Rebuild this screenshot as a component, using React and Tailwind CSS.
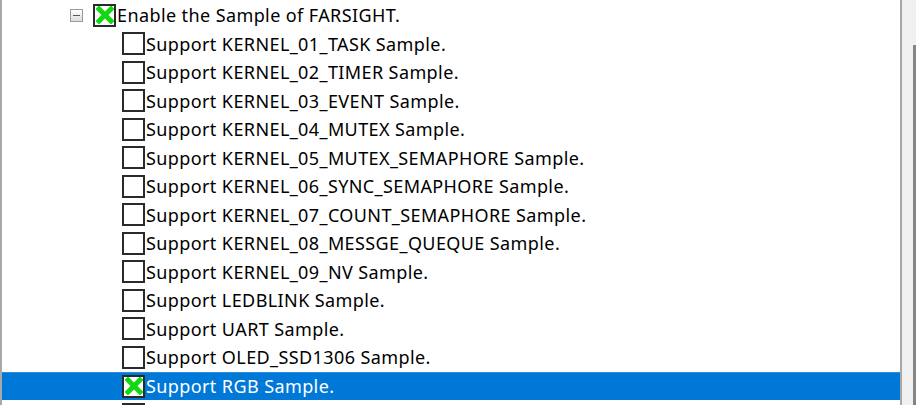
import React from 'react'

const items = [
  'Support KERNEL_01_TASK Sample.',
  'Support KERNEL_02_TIMER Sample.',
  'Support KERNEL_03_EVENT Sample.',
  'Support KERNEL_04_MUTEX Sample.',
  'Support KERNEL_05_MUTEX_SEMAPHORE Sample.',
  'Support KERNEL_06_SYNC_SEMAPHORE Sample.',
  'Support KERNEL_07_COUNT_SEMAPHORE Sample.',
  'Support KERNEL_08_MESSGE_QUEQUE Sample.',
  'Support KERNEL_09_NV Sample.',
  'Support LEDBLINK Sample.',
  'Support UART Sample.',
  'Support OLED_SSD1306 Sample.',
  { label: 'Support RGB Sample.', checked: true, selected: true },
  { label: '' },
]

function Check({ checked }) {
  return (
    <span className="w-[23px] h-[23px] shrink-0 border-2 border-[#2a2a2a] bg-white flex items-center justify-center">
      {checked && (
        <svg width="18" height="18" viewBox="0 0 18 18">
          <path d="M3 3 L15 15 M15 3 L3 15" stroke="#12d812" strokeWidth="5" strokeLinecap="square" />
        </svg>
      )}
    </span>
  )
}

function Row({ level, label, checked, selected, expander }) {
  return (
    <div className={`h-[28.5px] flex items-center ${selected ? 'bg-[#0078d7] border-t border-[#2b8fe0] text-white' : 'text-black'}`}>
      <div className={level === 0 ? 'w-[91px] flex justify-end pr-[10px] shrink-0' : 'w-[120px] shrink-0'}>
        {expander && (
          <span className="w-[13px] h-[13px] border border-[#9a9a9a] bg-gradient-to-b from-white to-[#dcdcdc] flex items-center justify-center">
            <span className="w-[7px] h-[1.5px] bg-[#4a5a75]" />
          </span>
        )}
      </div>
      <Check checked={checked} />
      {label && <span className="ml-[1px] whitespace-nowrap tracking-[0.4px]">{label}</span>}
    </div>
  )
}

export default function App() {
  return (
    <div className="w-[916px] h-[405px] overflow-hidden flex bg-white text-[18px] leading-none" style={{ fontFamily: '"Segoe UI", "Noto Sans", sans-serif' }}>
      <div className="w-[2px] bg-[#a8a8a8] shrink-0" />
      <div className="flex-1 pt-[1px] overflow-hidden">
        <Row level={0} label="Enable the Sample of FARSIGHT." checked expander />
        {items.map((it, i) => {
          const o = typeof it === 'string' ? { label: it } : it
          return <Row key={i} level={1} {...o} />
        })}
      </div>
      <div className="w-[2px] bg-[#a8a8a8] shrink-0" />
      <div className="w-[14px] bg-[#f0f0f0] flex justify-end pt-[45px] shrink-0">
        <div className="w-[3px] h-full bg-[#858585]" />
      </div>
    </div>
  )
}
